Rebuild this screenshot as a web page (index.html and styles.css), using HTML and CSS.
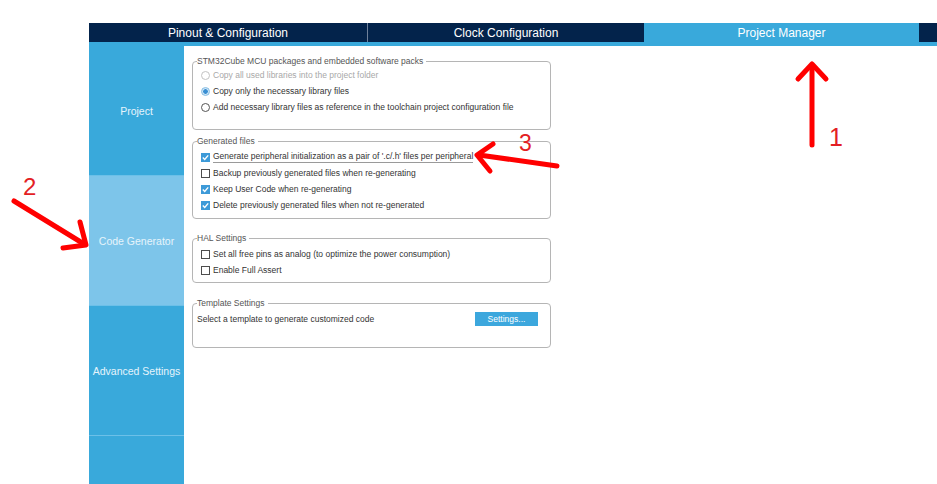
FILE: index.html
```html
<!DOCTYPE html>
<html>
<head>
<meta charset="utf-8">
<link rel="stylesheet" href="styles.css">
</head>
<body>
<div class="app">
  <div class="tabs">
    <div class="tab tab-pinout">Pinout &amp; Configuration</div>
    <div class="tab tab-clock">Clock Configuration</div>
    <div class="tab tab-active">Project Manager</div>
  </div>
  <div class="strip"></div>
  <div class="main">
    <div class="sidebar">
      <div class="nav-item">Project</div>
      <div class="nav-item nav-active">Code Generator</div>
      <div class="nav-item">Advanced Settings</div>
      <div class="nav-item nav-last"></div>
    </div>
    <div class="content">
      <fieldset class="group group-packs">
        <legend>STM32Cube MCU packages and embedded software packs</legend>
        <div class="row row-disabled"><span class="rb rb-disabled"></span>Copy all used libraries into the project folder</div>
        <div class="row"><span class="rb rb-selected"></span>Copy only the necessary library files</div>
        <div class="row"><span class="rb"></span>Add necessary library files as reference in the toolchain project configuration file</div>
      </fieldset>
      <fieldset class="group group-files">
        <legend>Generated files</legend>
        <div class="row"><span class="cb cb-checked"><svg viewBox="0 0 9 9" width="9" height="9"><path d="M1.8 4.6 L3.7 6.4 L7.2 2.4" fill="none" stroke="#fff" stroke-width="1.4"/></svg></span><span class="focused">Generate peripheral initialization as a pair of '.c/.h' files per peripheral</span></div>
        <div class="row"><span class="cb"></span>Backup previously generated files when re-generating</div>
        <div class="row"><span class="cb cb-checked"><svg viewBox="0 0 9 9" width="9" height="9"><path d="M1.8 4.6 L3.7 6.4 L7.2 2.4" fill="none" stroke="#fff" stroke-width="1.4"/></svg></span>Keep User Code when re-generating</div>
        <div class="row"><span class="cb cb-checked"><svg viewBox="0 0 9 9" width="9" height="9"><path d="M1.8 4.6 L3.7 6.4 L7.2 2.4" fill="none" stroke="#fff" stroke-width="1.4"/></svg></span>Delete previously generated files when not re-generated</div>
      </fieldset>
      <fieldset class="group group-hal">
        <legend>HAL Settings</legend>
        <div class="row"><span class="cb"></span>Set all free pins as analog (to optimize the power consumption)</div>
        <div class="row"><span class="cb"></span>Enable Full Assert</div>
      </fieldset>
      <fieldset class="group group-template">
        <legend>Template Settings</legend>
        <div class="row row-plain"><span class="template-text">Select a template to generate customized code</span><span class="btn">Settings...</span></div>
      </fieldset>
    </div>
  </div>
</div>
<svg class="annotations" width="937" height="484" viewBox="0 0 937 484">
  <g fill="none" stroke="#ff0000" stroke-width="5" stroke-linecap="round" stroke-linejoin="round">
    <path d="M812 145 L812 66"/>
    <path d="M798 79 L812 64 L826 79"/>
    <path d="M14 201 L84 244"/>
    <path d="M80 222 L86 245 L63 248"/>
    <path d="M557 166 L479 155"/>
    <path d="M493 144 L477 155 L490 171"/>
  </g>
  <g class="ann-num" fill="#e31e24">
    <text x="829" y="146" font-size="25">1</text>
    <text x="23" y="195" font-size="24">2</text>
    <text x="519" y="151" font-size="23">3</text>
  </g>
</svg>
</body>
</html>
```

FILE: styles.css
```css
html, body {
  margin: 0;
  padding: 0;
  background: #ffffff;
  font-family: "Liberation Sans", Arial, sans-serif;
}

body {
  position: relative;
  width: 937px;
  height: 484px;
  overflow: hidden;
}

.app {
  padding: 23px 0 0 89px;
}

.tabs {
  display: flex;
  height: 19px;
  background: #03234b;
}

.tab {
  display: flex;
  align-items: center;
  justify-content: center;
  color: #ffffff;
  font-size: 12px;
}

.tab-pinout {
  width: 278px;
  border-right: 1px solid #6f819b;
}

.tab-clock {
  width: 276px;
}

.tab-active {
  width: 275px;
  background: #39a9db;
}

.strip {
  height: 4px;
  background: #39a9db;
}

.main {
  display: flex;
}

.sidebar {
  width: 95px;
  display: flex;
  flex-direction: column;
}

.nav-item {
  height: 129px;
  display: flex;
  align-items: center;
  justify-content: center;
  background: #39a9db;
  border-bottom: 1px solid #6cc0e8;
  color: #e6f4fb;
  font-size: 10.5px;
}

.nav-active {
  background: #7dc5ea;
}

.nav-last {
  height: 48px;
  border-bottom: none;
}

.content {
  width: 359px;
  padding: 10px 0 0 8px;
}

.group {
  margin: 0;
  padding: 0 4px;
  border: 1px solid #b5b5b5;
  border-radius: 4px;
  min-width: 0;
}

.group legend {
  padding: 0 3px 0 0;
  margin: 0;
  font-size: 8.5px;
  line-height: 11px;
  color: #555555;
}

.group-packs {
  padding-bottom: 14px;
}

.group-files {
  margin-top: 6px;
  padding-top: 2px;
  padding-bottom: 5px;
}

.group-hal {
  margin-top: 14px;
  padding-top: 2px;
  padding-bottom: 4px;
}

.group-template {
  margin-top: 15px;
  padding-top: 2px;
  padding-bottom: 20px;
}

.row {
  height: 16px;
  display: flex;
  align-items: center;
  gap: 3px;
  padding-left: 4px;
  font-size: 8.5px;
  color: #333333;
  white-space: nowrap;
}

.row-disabled {
  color: #a8a8a8;
}

.row-plain {
  padding-left: 0;
  gap: 0;
}

.template-text {
  width: 278px;
}

.cb {
  width: 9px;
  height: 9px;
  box-sizing: border-box;
  border: 1px solid #4d4d4d;
  background: #ffffff;
  flex: none;
  position: relative;
}

.cb svg {
  position: absolute;
  left: -1px;
  top: -1px;
}

.cb-checked {
  background: #3d9ad8;
  border-color: #3d9ad8;
}

.rb {
  width: 9px;
  height: 9px;
  box-sizing: border-box;
  border: 1px solid #555555;
  border-radius: 50%;
  background: #ffffff;
  flex: none;
}

.rb-disabled {
  border-color: #c2c2c2;
}

.rb-selected {
  border-color: #86bde3;
  background: radial-gradient(circle, #3a8fd3 0, #3a8fd3 2px, #cfe6f7 2.6px);
}

.focused {
  line-height: 11px;
  border-bottom: 1px solid #9a9a9a;
}

.btn {
  width: 63px;
  height: 14px;
  display: flex;
  align-items: center;
  justify-content: center;
  background: #3ca7dd;
  color: #ffffff;
  font-size: 8.5px;
}

.annotations {
  position: absolute;
  top: 0;
  left: 0;
  pointer-events: none;
}

.ann-num text {
  font-family: "Liberation Sans", Arial, sans-serif;
}
```
